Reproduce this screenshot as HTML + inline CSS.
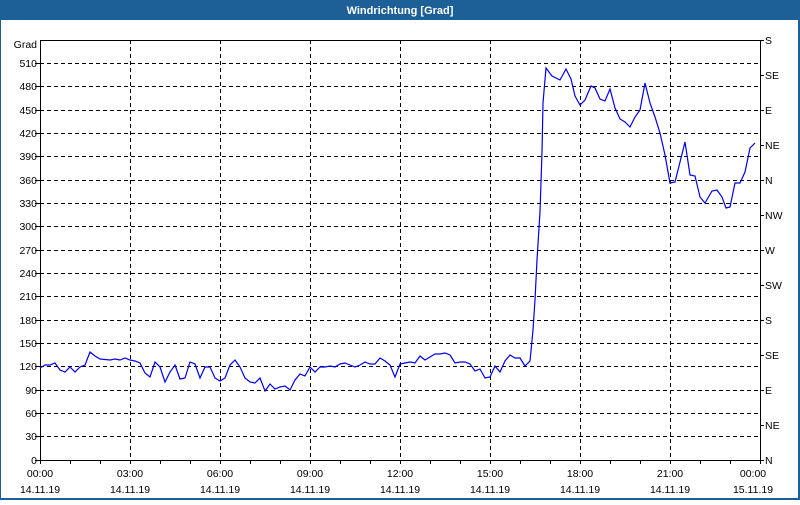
<!DOCTYPE html>
<html><head><meta charset="utf-8"><style>
html,body{margin:0;padding:0;background:#fff;}
body{width:800px;height:500px;overflow:hidden;font-family:"Liberation Sans",Tahoma,sans-serif;}
</style></head><body>
<svg width="800" height="500" xmlns="http://www.w3.org/2000/svg" font-family="Liberation Sans, sans-serif" font-size="10.5">
<rect x="0" y="0" width="800" height="500" fill="#fff"/>
<rect x="0" y="0" width="800" height="20" fill="#1d5f97"/>
<rect x="0" y="0" width="1" height="500" fill="#1d5f97"/>
<rect x="798" y="0" width="2" height="500" fill="#1d5f97"/>
<rect x="0" y="498" width="800" height="2" fill="#1d5f97"/>
<text x="400" y="14" fill="#fff" font-weight="bold" font-size="11" text-anchor="middle">Windrichtung [Grad]</text>
<g stroke="#000" stroke-width="1" stroke-dasharray="4,3" fill="none" shape-rendering="crispEdges">
<path d="M40 63.5H760M40 86.5H760M40 110.5H760M40 133.5H760M40 156.5H760M40 180.5H760M40 203.5H760M40 226.5H760M40 250.5H760M40 273.5H760M40 296.5H760M40 320.5H760M40 343.5H760M40 366.5H760M40 390.5H760M40 413.5H760M40 436.5H760"/>
<path d="M130.5 40V460M220.5 40V460M310.5 40V460M400.5 40V460M490.5 40V460M580.5 40V460M670.5 40V460"/>
</g>
<g stroke="#000" stroke-width="1" fill="none" shape-rendering="crispEdges">
<path d="M40.5 40V460.5H760.5V40M40 40.5H764"/>
<path d="M35 63.5H40M35 86.5H40M35 110.5H40M35 133.5H40M35 156.5H40M35 180.5H40M35 203.5H40M35 226.5H40M35 250.5H40M35 273.5H40M35 296.5H40M35 320.5H40M35 343.5H40M35 366.5H40M35 390.5H40M35 413.5H40M35 436.5H40M35 460.5H40"/>
<path d="M760 75.5H764M760 110.5H764M760 145.5H764M760 180.5H764M760 215.5H764M760 250.5H764M760 285.5H764M760 320.5H764M760 355.5H764M760 390.5H764M760 425.5H764M760 460.5H764"/>
<path d="M70.5 460V464M100.5 460V464M130.5 460V464M160.5 460V464M190.5 460V464M220.5 460V464M250.5 460V464M280.5 460V464M310.5 460V464M340.5 460V464M370.5 460V464M400.5 460V464M430.5 460V464M460.5 460V464M490.5 460V464M520.5 460V464M550.5 460V464M580.5 460V464M610.5 460V464M640.5 460V464M670.5 460V464M700.5 460V464M730.5 460V464M760.5 460V464M40.5 460V464"/>
</g>
<g fill="#000" text-anchor="end">
<text x="37" y="48">Grad</text>
<text x="37" y="67">510</text><text x="37" y="90">480</text><text x="37" y="114">450</text><text x="37" y="137">420</text><text x="37" y="160">390</text><text x="37" y="184">360</text><text x="37" y="207">330</text><text x="37" y="230">300</text><text x="37" y="254">270</text><text x="37" y="277">240</text><text x="37" y="300">210</text><text x="37" y="324">180</text><text x="37" y="347">150</text><text x="37" y="370">120</text><text x="37" y="394">90</text><text x="37" y="417">60</text><text x="37" y="440">30</text><text x="37" y="464">0</text>
</g>
<g fill="#000">
<text x="765" y="44">S</text><text x="765" y="79">SE</text><text x="765" y="114">E</text><text x="765" y="149">NE</text><text x="765" y="184">N</text><text x="765" y="219">NW</text><text x="765" y="254">W</text><text x="765" y="289">SW</text><text x="765" y="324">S</text><text x="765" y="359">SE</text><text x="765" y="394">E</text><text x="765" y="429">NE</text><text x="765" y="464">N</text>
</g>
<g fill="#000" text-anchor="middle">
<text x="40" y="477">00:00</text><text x="130" y="477">03:00</text><text x="220" y="477">06:00</text><text x="310" y="477">09:00</text><text x="400" y="477">12:00</text><text x="490" y="477">15:00</text><text x="580" y="477">18:00</text><text x="670" y="477">21:00</text><text x="753" y="477">00:00</text>
<text x="40" y="493">14.11.19</text><text x="130" y="493">14.11.19</text><text x="220" y="493">14.11.19</text><text x="310" y="493">14.11.19</text><text x="400" y="493">14.11.19</text><text x="490" y="493">14.11.19</text><text x="580" y="493">14.11.19</text><text x="670" y="493">14.11.19</text><text x="753" y="493">15.11.19</text>
</g>
<polyline fill="none" stroke="#0000ee" stroke-width="1.2" points="40,368 45,365 50,365 55,363 60,370 65,372 70,367 75,372 80,367 85,365 90,352 95,356 100,359 110,360 115,359 120,360 125,358 130,360 135,361 140,363 145,373 150,377 155,362 160,367 165,382 170,372 175,365 180,379 185,378 190,362 195,364 200,378 205,367 210,367 215,378 220,381 225,378 230,365 235,360 240,367 245,378 250,382 255,383 260,378 265,391 270,384 275,389 280,387 285,386 290,390 295,380 300,374 305,376 310,367 315,372 320,367 325,367 330,366 335,367 340,364 345,363 350,365 355,367 360,365 365,362 370,364 375,364 380,358 385,361 390,365 395,377 400,364 405,363 410,362 415,363 420,356 425,360 430,357 435,354 440,354 445,353 450,355 455,363 460,362 465,362 470,364 475,371 480,369 485,378 490,377 495,366 500,372 505,361 510,355 515,358 520,358 525,366 530,361 533,330 535,300 537,260 540,212 542,152 543,103 546,68 552,76 560,80 566,69 571,79 575,96 580,105 585,100 591,86 595,88 600,99 605,101 610,89 615,108 620,119 625,122 630,127 635,117 640,110 645,83 650,103 655,117 660,133 665,155 670,183 675,182 680,162 685,142 690,175 695,176 700,197 705,203 712,191 717,190 722,197 726,208 730,207 735,183 740,183 745,172 750,148 755,143"/>
</svg>
</body></html>
